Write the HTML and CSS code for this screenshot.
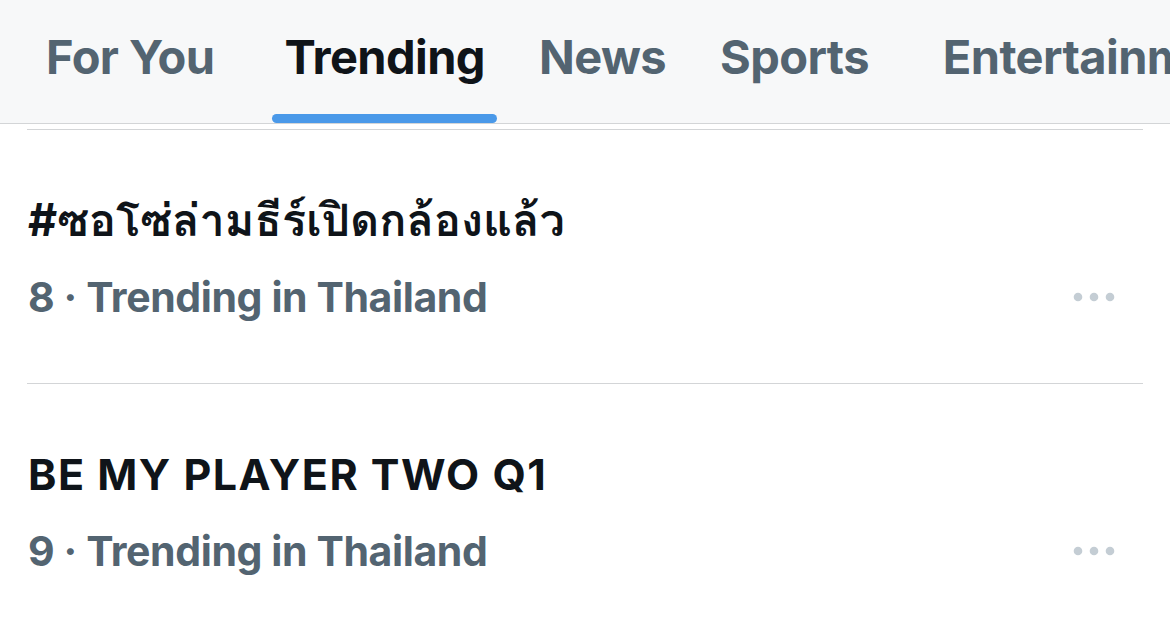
FILE: index.html
```html
<!DOCTYPE html>
<html lang="en">
<head>
<meta charset="utf-8">
<title>Trending</title>
<link rel="stylesheet" href="styles.css">
</head>
<body>
<header class="tabbar">
  <nav class="tabs">
    <a class="tab tab-first">For You<span class="indicator"></span></a>
    <a class="tab tab-active">Trending<span class="indicator"></span></a>
    <a class="tab">News<span class="indicator"></span></a>
    <a class="tab tab-sports">Sports<span class="indicator"></span></a>
    <a class="tab">Entertainment<span class="indicator"></span></a>
  </nav>
</header>
<main class="list">
  <section class="item">
    <div class="title title-thai" lang="th">#ซอโซ่ล่ามธีร์เปิดกล้องแล้ว</div>
    <div class="meta-row">
      <span class="meta">8 · Trending in Thailand</span>
      <svg class="more" width="42" height="10" viewBox="0 0 42 10"><circle cx="5" cy="5" r="4.3"/><circle cx="21" cy="5" r="4.3"/><circle cx="37" cy="5" r="4.3"/></svg>
    </div>
  </section>
  <section class="item">
    <div class="title">BE MY PLAYER TWO Q1</div>
    <div class="meta-row">
      <span class="meta">9 · Trending in Thailand</span>
      <svg class="more" width="42" height="10" viewBox="0 0 42 10"><circle cx="5" cy="5" r="4.3"/><circle cx="21" cy="5" r="4.3"/><circle cx="37" cy="5" r="4.3"/></svg>
    </div>
  </section>
</main>
</body>
</html>
```

FILE: styles.css
```css
html, body {
  margin: 0;
  padding: 0;
  background: #ffffff;
}
body {
  width: 1170px;
  height: 628px;
  overflow: hidden;
  font-family: Inter, "Noto Sans", "Noto Sans Thai", sans-serif;
  -webkit-font-smoothing: antialiased;
}
.tabbar {
  height: 123px;
  background: #f7f8f9;
  border-bottom: 1px solid #d3d5d7;
  overflow: hidden;
}
.tabs {
  display: flex;
  gap: 26px;
  padding-left: 32px;
  white-space: nowrap;
}
.tab {
  display: flex;
  flex-direction: column;
  justify-content: space-between;
  height: 123px;
  padding: 29px 14px 0;
  box-sizing: border-box;
  font-size: 47px;
  line-height: 56px;
  font-weight: 700;
  letter-spacing: -0.6px;
  color: #536471;
}
.tab-first {
  margin-right: 16px;
}
.tab-sports {
  margin-right: 20px;
}
.tab-active {
  color: #0f1419;
}
.indicator {
  display: block;
  height: 9px;
  margin: 0 -12px;
  border-radius: 5px;
  background: transparent;
}
.tab-active .indicator {
  background: #4a99e9;
}
.list {
  padding: 5px 27px 0 27px;
}
.item {
  border-top: 1px solid #d3d5d7;
  padding: 66px 0 62px 1px;
}
.title {
  font-size: 43px;
  line-height: 48px;
  height: 48px;
  font-weight: 700;
  letter-spacing: 1.5px;
  color: #0f1419;
  white-space: nowrap;
}
.title-thai {
  font-family: Inter, "Loma", "Garuda", "Waree", "Noto Sans Thai", sans-serif;
  font-size: 45px;
  letter-spacing: 0;
}
.meta-row {
  display: flex;
  align-items: center;
  justify-content: space-between;
  margin-top: 29px;
  height: 48px;
}
.meta {
  font-size: 41px;
  line-height: 48px;
  font-weight: 700;
  letter-spacing: -0.4px;
  color: #536471;
}
.more {
  fill: #c4cdd4;
  margin-right: 28px;
}
```
